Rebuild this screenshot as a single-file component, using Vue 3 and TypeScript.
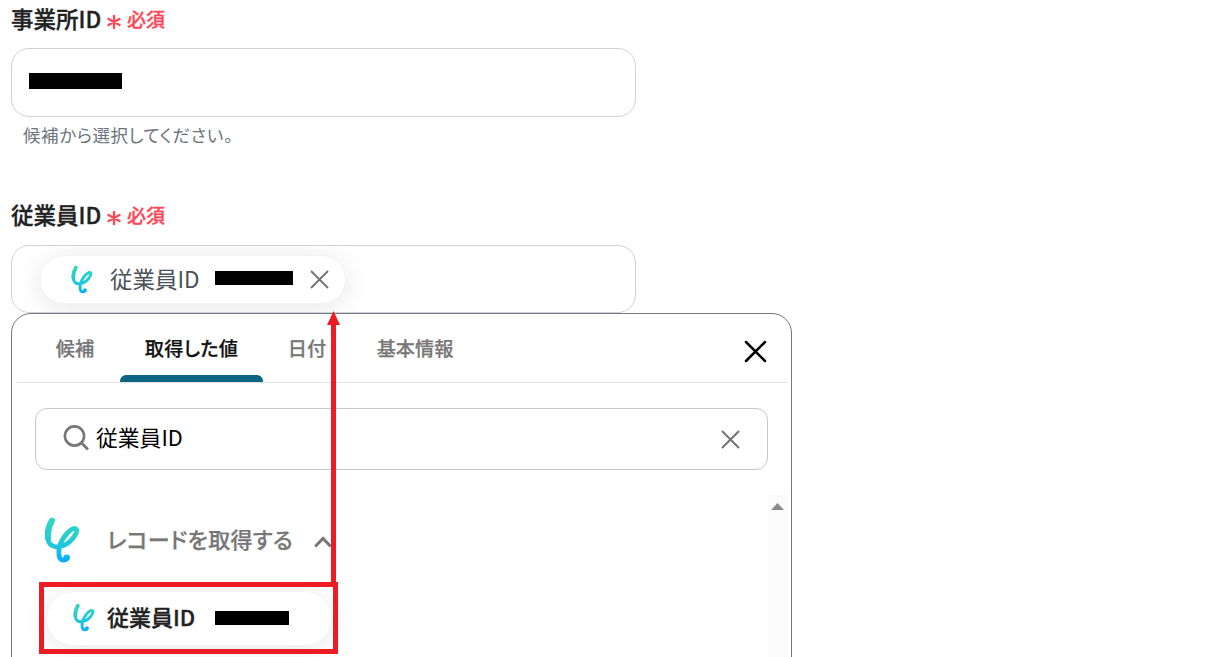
<script setup lang="ts">
import { ref } from 'vue'

interface Tab {
  key: string
  label: string
}

const tabs: Tab[] = [
  { key: 'candidate', label: '候補' },
  { key: 'output', label: '取得した値' },
  { key: 'date', label: '日付' },
  { key: 'basic', label: '基本情報' },
]
const activeTab = ref('output')
const keyword = ref('従業員ID')
const expanded = ref(true)

const clearKeyword = () => {
  keyword.value = ''
}
</script>

<template>
  <div class="page">
    <svg class="defs" width="0" height="0">
      <defs>
        <linearGradient id="brand" x1="0" y1="0" x2="0" y2="46" gradientUnits="userSpaceOnUse">
          <stop offset="0" stop-color="#32d9bd" />
          <stop offset="0.5" stop-color="#24ccd5" />
          <stop offset="0.78" stop-color="#18bfe8" />
          <stop offset="1" stop-color="#00a8ff" />
        </linearGradient>
        <symbol id="logo" viewBox="0 0 36 46">
          <path
            d="M8 3.500C3.500 11 2.600 18.500 4.200 23.500C5.800 28.500 10.500 30.400 15 29.700C20.500 29 25 26 28.500 21.800C31.500 18 33.700 14.300 32.200 12.200C30.200 9.600 24.400 14 20.500 19.500C16.800 24.700 15.200 29 15 33C14.500 39.500 15.500 43 19.500 43.200C21.300 43.200 22.500 42 23 41"
            fill="none" stroke="url(#brand)" stroke-width="4.800" stroke-linecap="round" stroke-linejoin="round"
          />
          <path
            d="M7.900 3.600C4.200 10 3.400 16 4 21"
            fill="none" stroke="url(#brand)" stroke-width="6" stroke-linecap="round"
          />
          <circle cx="22.600" cy="40.800" r="3.300" fill="url(#brand)" />
        </symbol>
        <symbol id="asterisk" viewBox="0 0 14 16">
          <path d="M7 1.800V14.200M1.500 4.900L12.500 11.100M12.500 4.900L1.500 11.100" stroke="#ff4757" stroke-width="2.300" stroke-linecap="round" />
        </symbol>
      </defs>
    </svg>

    <div class="label">
      <span class="label-text">事業所ID</span>
      <svg class="asterisk"><use href="#asterisk" /></svg>
      <span class="required">必須</span>
    </div>
    <div class="field">
      <span class="mask office" />
    </div>
    <div class="helper">候補から選択してください。</div>

    <div class="label second">
      <span class="label-text">従業員ID</span>
      <svg class="asterisk"><use href="#asterisk" /></svg>
      <span class="required">必須</span>
    </div>
    <div class="field employee">
      <div class="chip">
        <svg class="logo-small"><use href="#logo" /></svg>
        <span class="chip-text">従業員ID</span>
        <span class="mask value" />
        <svg class="chip-close" viewBox="0 0 20 20">
          <path d="M2 2L19 19M19 2L2 19" stroke="#737373" stroke-width="1.900" />
        </svg>
      </div>
    </div>

    <div class="panel">
      <div class="tabs">
        <div
          v-for="tab in tabs"
          :key="tab.key"
          class="tab"
          :class="[tab.key, { active: tab.key === activeTab }]"
          @click="activeTab = tab.key"
        >
          {{ tab.label }}
        </div>
        <svg class="panel-close" viewBox="0 0 24 24">
          <path d="M3 3L22 22M22 3L3 22" stroke="#000" stroke-width="2.500" stroke-linecap="round" />
        </svg>
      </div>
      <div class="search">
        <svg class="search-icon" viewBox="0 0 26 26">
          <circle cx="11.500" cy="11" r="9.600" fill="none" stroke="#777" stroke-width="2.600" />
          <path d="M18.300 17.800L25 24.500" stroke="#777" stroke-width="2.800" />
        </svg>
        <span class="search-text">{{ keyword }}</span>
        <svg class="search-clear" viewBox="0 0 20 20" @click="clearKeyword">
          <path d="M2 2L19 19M19 2L2 19" stroke="#737373" stroke-width="2" />
        </svg>
      </div>
      <div class="results">
        <div class="list">
          <div class="group" @click="expanded = !expanded">
            <svg class="logo-large"><use href="#logo" /></svg>
            <span class="group-text">レコードを取得する</span>
            <svg class="chevron" viewBox="0 0 18 12">
              <path d="M1.200 10.500L9 2.500L16.800 10.500" fill="none" stroke="#777" stroke-width="3" />
            </svg>
          </div>
          <div v-if="expanded" class="option">
            <svg class="logo-small"><use href="#logo" /></svg>
            <span class="option-text">従業員ID</span>
            <span class="mask candidate-value" />
          </div>
        </div>
        <div class="scrollbar">
          <svg width="13" height="7" viewBox="0 0 13 7">
            <path d="M6.500 0L13 7H0Z" fill="#8b8b8b" />
          </svg>
        </div>
      </div>
    </div>

    <!-- annotation: the highlighted option goes into the employee field -->
    <div class="highlight" />
    <svg class="arrow" width="13" height="272" viewBox="0 0 13 272">
      <path d="M6.500 0L13 14H9V272H4V14H0Z" fill="#ed1c24" />
    </svg>
  </div>
</template>

<style>
body {
  background: #fff;
}
</style>

<style scoped>
.page {
  position: relative;
  box-sizing: border-box;
  width: 1210px;
  height: 657px;
  padding-left: 11px;
  overflow: hidden;
  font-family: "Noto Sans CJK JP", sans-serif;
  font-feature-settings: "palt";
  color: #222;
  white-space: nowrap;
}

.page *,
.page *::after {
  box-sizing: border-box;
}

.page svg {
  flex: none;
}

.defs {
  position: absolute;
}

.label {
  display: flex;
  align-items: center;
  height: 40px;
  margin-bottom: 8px;
}

.label.second {
  margin-top: 42px;
}

.label-text {
  width: 96px;
  padding-bottom: 4px;
  font-size: 22.5px;
  font-weight: 500;
  -webkit-text-stroke: 0.35px currentColor;
}

.second .label-text {
  padding-bottom: 6px;
}

.asterisk {
  width: 14px;
  height: 16px;
  margin-top: 3px;
}

.second .asterisk {
  margin-top: 2px;
}

.required {
  margin-left: 6px;
  padding-bottom: 3px;
  font-size: 19px;
  font-weight: 500;
  color: #ff4757;
  -webkit-text-stroke: 0.3px currentColor;
}

.second .required {
  padding-bottom: 5px;
}

.field {
  display: flex;
  align-items: center;
  width: 625px;
  height: 69px;
  border: 1px solid #cfd2dc;
  border-radius: 18px;
}

.mask {
  flex: none;
  background: #000;
}

.office {
  width: 93px;
  height: 16px;
  margin: 0 0 3px 17px;
}

.helper {
  height: 38px;
  padding-left: 12px;
  font-size: 17.5px;
  letter-spacing: 0.6px;
  line-height: 36px;
  color: #6c757d;
}

.employee {
  height: 68px;
  padding-left: 28px;
  overflow: hidden;
}

.chip {
  display: flex;
  align-items: center;
  width: 306px;
  height: 49px;
  padding-left: 30px;
  border: 1px solid #f4f4f4;
  border-radius: 25px;
  background: #fff;
  box-shadow: 0 4px 28px rgba(0, 0, 0, 0.1);
}

.logo-small {
  width: 22px;
  height: 29px;
}

.chip-text {
  width: 105px;
  margin-left: 17px;
  padding-bottom: 3px;
  font-size: 22.5px;
  color: #495057;
}

.value {
  width: 78px;
  height: 14px;
  margin-bottom: 3px;
}

.chip-close {
  width: 20px;
  height: 20px;
  margin-left: 16px;
}

.panel {
  width: 781px;
  height: 400px;
  border: 1px solid #777;
  border-radius: 20px;
  background: #fff;
}

.tabs {
  display: flex;
  height: 69px;
  margin: 0 4px 0 5px;
  border-bottom: 1px solid #e2e2e2;
}

.tab {
  position: relative;
  height: 69px;
  font-size: 19.2px;
  font-weight: 500;
  line-height: 69px;
  text-align: center;
  color: #777;
  -webkit-text-stroke: 0.25px currentColor;
}

.tab.active {
  letter-spacing: 0.3px;
  color: #111;
}

.tab.active::after {
  content: "";
  position: absolute;
  bottom: 1px;
  left: 0;
  width: 100%;
  height: 7px;
  border-radius: 6px 6px 0 0;
  background: #0c6682;
}

.candidate {
  width: 88px;
  margin-left: 14px;
}

.output {
  width: 143px;
  margin-left: 1px;
}

.date {
  width: 88px;
}

.basic {
  width: 128px;
}

.panel-close {
  width: 24px;
  height: 24px;
  margin: 25px 20px 0 auto;
}

.search {
  display: flex;
  align-items: center;
  width: 733px;
  height: 62px;
  margin: 25px 0 0 23px;
  padding: 0 27px;
  border: 1px solid #c8c8c8;
  border-radius: 12px;
}

.search-icon {
  width: 26px;
  height: 26px;
  margin-bottom: 2px;
}

.search-text {
  margin-left: 7px;
  padding-bottom: 5px;
  font-size: 21.8px;
  color: #000;
}

.search-clear {
  width: 20px;
  height: 20px;
  margin-left: auto;
}

.results {
  display: flex;
  height: 180px;
  margin-top: 25px;
}

.list {
  width: 756px;
}

.group {
  display: flex;
  align-items: center;
  height: 96px;
  padding-left: 32px;
}

.logo-large {
  width: 36px;
  height: 46px;
  margin-top: -6px;
}

.group-text {
  width: 207px;
  margin: -11px 0 0 27px;
  font-size: 22px;
  font-weight: 500;
  letter-spacing: 0.3px;
  color: #777;
  -webkit-text-stroke: 0.25px currentColor;
}

.chevron {
  width: 18px;
  height: 12px;
  margin-top: -2px;
}

.option {
  display: flex;
  align-items: center;
  width: 286px;
  height: 55px;
  margin-left: 34px;
  padding: 0 0 2px 26px;
  border: 1px solid #f4f4f4;
  border-radius: 28px;
  background: #fff;
  box-shadow: 0 4px 28px rgba(0, 0, 0, 0.09);
}

.option-text {
  width: 108px;
  margin-left: 12px;
  padding-bottom: 3px;
  font-size: 22px;
  font-weight: 500;
  -webkit-text-stroke: 0.35px currentColor;
}

.candidate-value {
  width: 74px;
  height: 14px;
}

.scrollbar {
  display: flex;
  justify-content: center;
  width: 19px;
  padding-top: 8px;
  background: #fbfbfb;
}

.highlight {
  position: absolute;
  top: 582px;
  left: 39px;
  width: 299px;
  height: 72px;
  border: 5px solid #ed1c24;
}

.arrow {
  position: absolute;
  top: 311px;
  left: 327px;
}
</style>
